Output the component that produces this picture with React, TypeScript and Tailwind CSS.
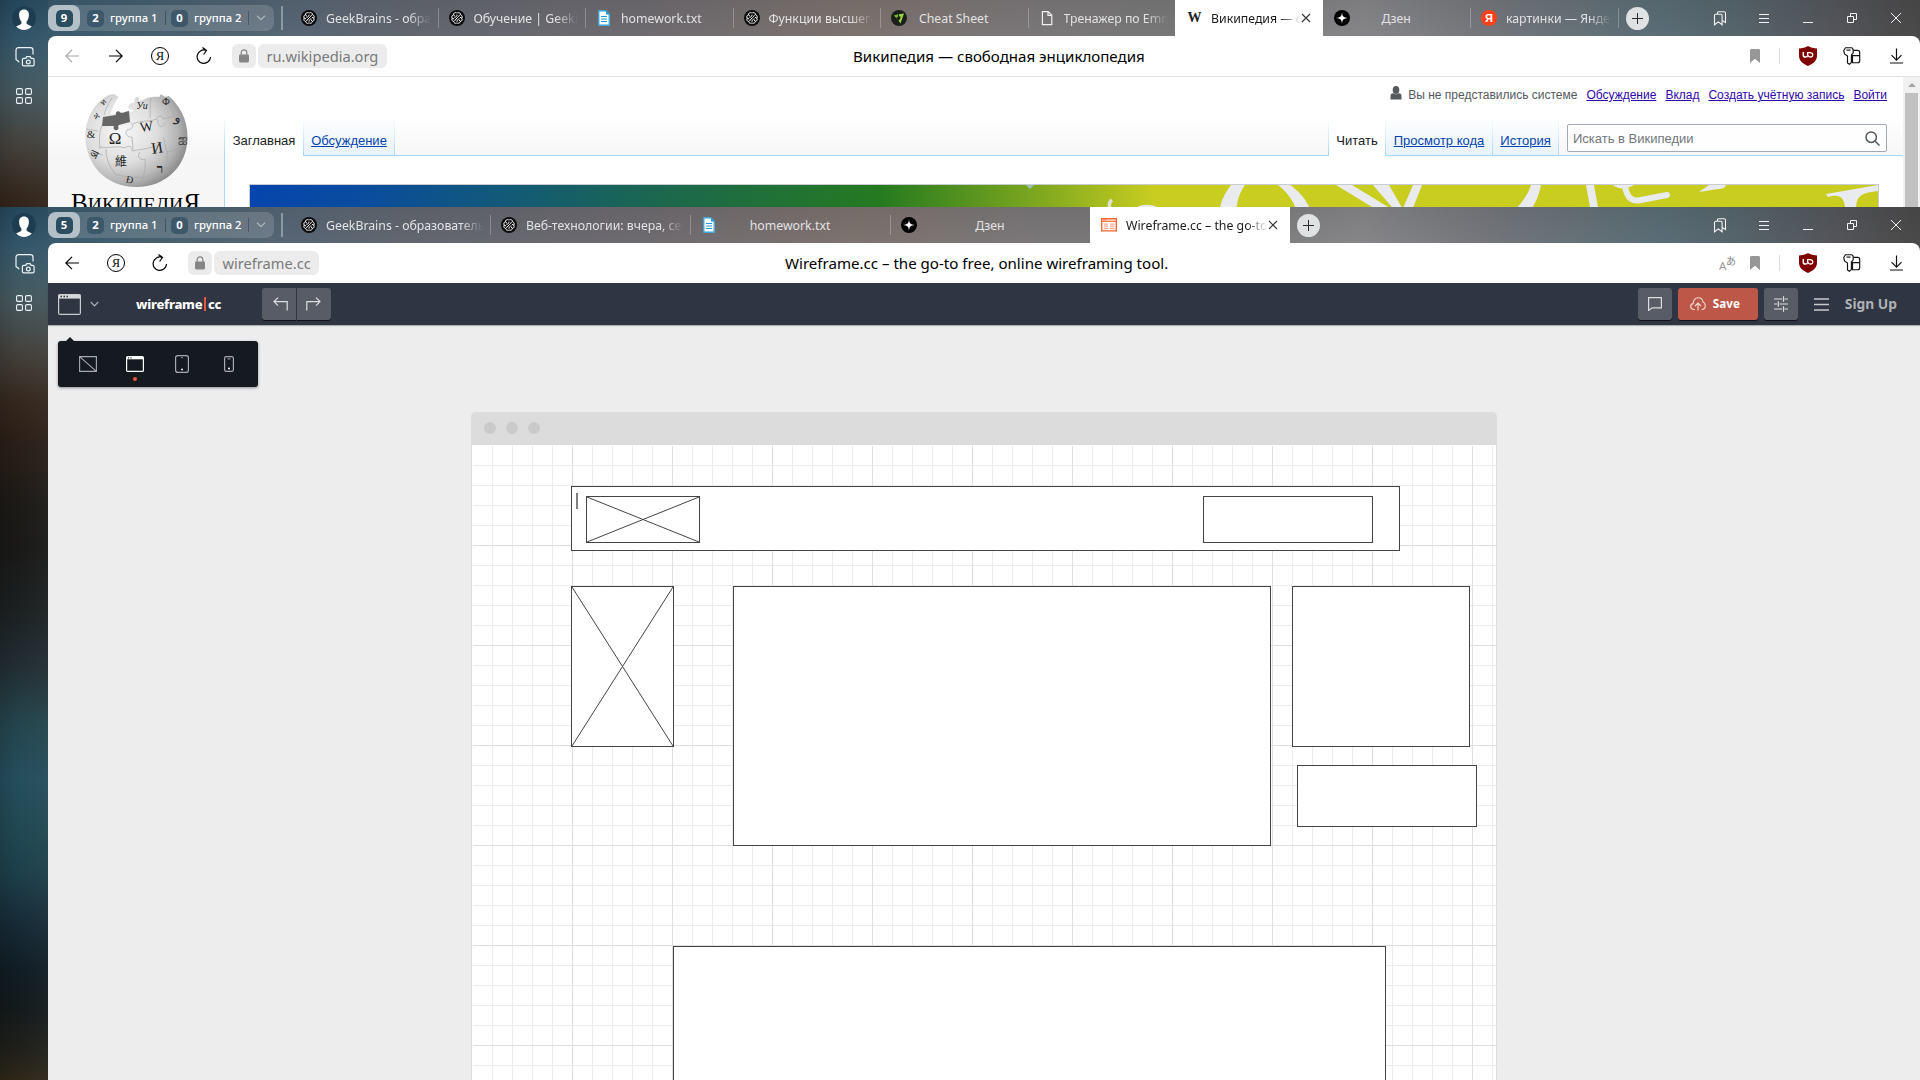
import type { ReactNode } from "react";

const UI = "font-['Noto_Sans','Open_Sans',sans-serif]";
const WIKI = "font-['Liberation_Sans',Arial,sans-serif]";

/* ---------- favicons ---------- */

function GeekIcon() {
  return (
    <svg width="16" height="16" viewBox="0 0 16 16" fill="none" stroke="#fff" strokeLinecap="round">
      <circle cx="8" cy="8" r="8" fill="#0b0b0b" stroke="none" />
      <path
        d="M7.300 2.700C5.600 2.200 4.300 3.300 4.500 4.700 2.900 5.200 2.300 7 3.200 8.200c-.8 1.500-.1 3 1.500 3.300.2 1.400 1.400 2.100 2.700 1.700M8.700 2.700c1.700-.5 3 .6 2.800 2 1.600.5 2.200 2.300 1.300 3.500.8 1.500.1 3-1.500 3.300-.2 1.400-1.400 2.100-2.700 1.700M5.800 7.300c1.200 0 2.200-.9 2.200-2.300M10.200 9c-1.200 0-2.200.9-2.200 2.300M10.500 5.200c-.6 1.200-1.600 1.800-2.500 2.800S6.200 10.200 5.500 10.900M4.600 5l1 .8M11.400 11.200l-1-.8M11.200 7.400l1.300.7M3.500 8.200l1.300.7"
        strokeWidth="1"
      />
    </svg>
  );
}

function DocIcon() {
  return (
    <svg width="16" height="16" viewBox="0 0 16 16">
      <path d="M2.5.5h7.6L14 4.4v11.1H2.5z" fill="#fff" />
      <path d="M2.8.8h7l3.4 3.6v10.8H2.8z" fill="#fff" stroke="#1d9cd8" strokeWidth="1.2" />
      <path d="M10 .5v4h4z" fill="#1d9cd8" />
      <path d="M5 6.5h6M5 9h6M5 11.5h6" stroke="#1d9cd8" strokeWidth="1.1" />
    </svg>
  );
}

function EmmetIcon() {
  return (
    <svg width="16" height="16" viewBox="0 0 16 16">
      <circle cx="8" cy="8" r="8" fill="#1c1e1c" />
      <path d="M2.800 5.400 7.400 4.300l-.6 2.700-1.500.5 2.600 3z" fill="#7bbd2a" />
      <path d="m8 4.200 5-.8-3.500 10-2-3 1.700-1.400.4-2.700-1.600.3z" fill="#95d63f" />
    </svg>
  );
}

function PageIcon() {
  return (
    <svg width="16" height="16" viewBox="0 0 16 16" fill="none" stroke="#f0f0f0" strokeWidth="1.2">
      <path d="M3.4 1.6h5.8l3.6 3.6v9.4H3.4zM9 1.6v3.8h3.8" />
    </svg>
  );
}

function WikiIcon() {
  return <span className="w-4 text-center font-['Liberation_Serif',serif] text-[14px] font-bold leading-4 tracking-[-1px] text-[#222]">W</span>;
}

function ZenIcon() {
  return (
    <svg width="16" height="16" viewBox="0 0 16 16">
      <circle cx="8" cy="8" r="8" fill="#000" />
      <path d="M8 2c.3 4.3 1.4 5.6 6 6-4.6.4-5.7 1.700-6 6-.3-4.300-1.400-5.600-6-6 4.600-.4 5.700-1.700 6-6z" fill="#fff" />
    </svg>
  );
}

function YandexRedIcon() {
  return (
    <span className="flex size-4 items-center justify-center rounded-full bg-[#fc3f1d] font-['Liberation_Sans',sans-serif] text-[11px] font-bold leading-none text-white">
      Я
    </span>
  );
}

function WireframeIcon() {
  return (
    <svg width="16" height="16" viewBox="0 0 16 16" fill="none" stroke="#f4652f">
      <path d="M.7 1.700h14.600v12.200H.7z" strokeWidth="1.400" />
      <path d="M1 4.300h14" strokeWidth="1.200" />
      <path d="M3 7.200h4M3 9.200h4M3 11.500h4M9 7.200h4.500M9 9.200h4.500M9 11.500h4.500" stroke="#f8a98a" strokeWidth="1.300" />
      <path d="M2 2.800h4" strokeWidth=".8" />
    </svg>
  );
}

/* ---------- browser chrome ---------- */

type Tab = { icon: ReactNode; title: string; center?: boolean; active?: boolean };

function TabItem({ tab, width, divider }: { tab: Tab; width: string; divider: boolean }) {
  const fade = "[mask-image:linear-gradient(to_right,#000_calc(100%-22px),transparent)]";
  return (
    <div className={`relative flex h-9 shrink-0 items-center ${width} ${tab.active ? "bg-white text-[#1b1b1b]" : "text-[#e2e2e4]"}`}>
      <span className="ml-[11px] flex size-4 shrink-0 items-center justify-center">{tab.icon}</span>
      <span
        className={`ml-[9px] min-w-0 flex-1 overflow-hidden whitespace-nowrap pt-px text-[12.3px] leading-5 ${
          tab.center ? "mr-[36px] text-center" : tab.active ? `mr-[22px] ${fade}` : `mr-[7px] ${fade}`
        }`}
      >
        {tab.title}
      </span>
      {tab.active && (
        <svg className="absolute right-[12px] top-[13px]" width="10" height="10" viewBox="0 0 10 10" stroke="#333" strokeWidth="1.1">
          <path d="m1 1 8 8M9 1 1 9" />
        </svg>
      )}
      {divider && <span className="absolute -right-px top-2 h-5 w-px bg-white/25" />}
    </div>
  );
}

function Groups({ count }: { count: string }) {
  return (
    <div className="flex h-[26px] w-[226px] shrink-0 items-center rounded-lg bg-white/15 text-[11.3px] text-white">
      <div className="flex h-[26px] w-8 items-center justify-center rounded-lg bg-[#b3c0c8]">
        <span className="flex h-[17px] w-[17px] items-center justify-center rounded-[5px] bg-[#2b4d60] font-bold">{count}</span>
      </div>
      <span className="ml-[7px] flex h-[17px] w-[17px] items-center justify-center rounded-[5px] bg-[#3b586b] font-bold">2</span>
      <span className="ml-[6px] w-[50px] whitespace-nowrap font-medium">группа 1</span>
      <span className="ml-[5px] h-[14px] w-px bg-[#3d5666]" />
      <span className="ml-[5px] flex h-[17px] w-[17px] items-center justify-center rounded-[5px] bg-[#3f5869] font-bold">0</span>
      <span className="ml-[6px] w-[50px] whitespace-nowrap font-medium">группа 2</span>
      <span className="ml-[4px] h-[14px] w-px bg-[#46596a]" />
      <svg className="ml-[7px]" width="10" height="6" viewBox="0 0 10 6" fill="none" stroke="#aab4bd" strokeWidth="1.3">
        <path d="m1 .7 4 4 4-4" />
      </svg>
    </div>
  );
}

function WindowControls() {
  return (
    <div className="ml-auto mr-[2px] flex h-9 items-center text-[#f2f2f2] [&>span]:flex [&>span]:w-11 [&>span]:justify-center">
      <span>
        <svg width="14" height="15" viewBox="0 0 14 15" fill="none" stroke="currentColor" strokeWidth="1.100">
          <path d="M1.500 4.500c0-.8.500-1.200 1.200-1.200h5.200c.8 0 1.200.5 1.200 1.200v9.300L5.300 10.900 1.500 13.800zM4.400 3.200V2c0-.8.500-1.300 1.300-1.300h5.500c.8 0 1.300.5 1.300 1.300v9.500l-3.200-2" />
        </svg>
      </span>
      <span>
        <svg width="10" height="11" viewBox="0 0 10 11" stroke="currentColor">
          <path d="M0 1.500h10M0 5.500h10M0 9.500h10" />
        </svg>
      </span>
      <span>
        <svg width="10" height="10" viewBox="0 0 10 10" stroke="currentColor">
          <path d="M0 9.500h10" />
        </svg>
      </span>
      <span>
        <svg width="10" height="10" viewBox="0 0 10 10" fill="none" stroke="currentColor">
          <path d="M.5 3.500h6v6h-6zM3.500 3.500v-3h6v6h-3" />
        </svg>
      </span>
      <span>
        <svg width="10" height="10" viewBox="0 0 10 10" stroke="currentColor">
          <path d="m0 0 10 10M10 0 0 10" />
        </svg>
      </span>
    </div>
  );
}

function TabBar({ count, tabs, widths, lastDivider }: { count: string; tabs: Tab[]; widths: string; lastDivider: boolean }) {
  return (
    <div className="flex h-9 items-center">
      <Groups count={count} />
      <span className="ml-[7px] mr-[7px] h-6 w-[2px] shrink-0 bg-white/35" />
      {tabs.map((t, i) => (
        <TabItem key={t.title} tab={t} width={widths} divider={i === tabs.length - 1 ? lastDivider : !t.active && !tabs[i + 1].active} />
      ))}
      <span className={`${lastDivider ? "ml-[8px]" : "ml-[7px]"} flex size-[23px] shrink-0 items-center justify-center rounded-full bg-[#dfe1e3]`}>
        <svg width="11" height="11" viewBox="0 0 11 11" stroke="#2a2a2a" strokeWidth="1">
          <path d="M5.500 0v11M0 5.500h11" />
        </svg>
      </span>
      <WindowControls />
    </div>
  );
}

function ArrowIcon({ flip, muted }: { flip?: boolean; muted?: boolean }) {
  return (
    <svg className={`${flip ? "rotate-180" : ""} ${muted ? "text-[#a6a6a6]" : "text-black"}`} width="14" height="14" viewBox="0 0 14 14" fill="none" stroke="currentColor" strokeWidth="1.2">
      <path d="M14 7H.8M7 .8.8 7 7 13.200" />
    </svg>
  );
}

function AddressBar({ host, title, forward, titleOffset, translate }: { host: string; title: string; forward?: boolean; titleOffset: string; translate?: boolean }) {
  return (
    <div className="flex h-10 items-center rounded-t-lg bg-white text-black">
      <div className={`flex shrink-0 items-center ${titleOffset} [&>b]:flex [&>b]:w-11 [&>b]:shrink-0 [&>b]:justify-center`}>
        <b className="ml-[2px]">
          <ArrowIcon muted={forward} />
        </b>
        {forward && (
          <b>
            <ArrowIcon flip />
          </b>
        )}
        <b>
          <span className="flex size-[18px] items-center justify-center rounded-full border border-black font-['Liberation_Serif',serif] text-[12px] font-normal leading-none">
            Я
          </span>
        </b>
        <b>
          <svg width="16" height="18" viewBox="0 0 16 18" fill="none" stroke="currentColor" strokeWidth="1.2">
            <path d="M9.800 3.300A6.700 6.700 0 1 0 14.500 10M6.500.600l4 2.900-2.900 4" />
          </svg>
        </b>
        <span className="ml-[6px] flex h-6 w-6 items-center justify-center rounded-md bg-[#ebebeb]">
          <svg width="12" height="14" viewBox="0 0 12 14">
            <path d="M3.200 6V3.600a2.800 2.800 0 0 1 5.600 0V6" fill="none" stroke="#858585" strokeWidth="1.200" />
            <rect x="1" y="5.400" width="10" height="8" rx="1.300" fill="#858585" />
          </svg>
        </span>
        <span className="ml-[2px] flex h-6 items-center rounded-md bg-[#ececec] px-[8.500px] text-[14.65px] leading-6 text-[#7a7a7a]">{host}</span>
      </div>
      <span className="whitespace-nowrap text-[15.080px] leading-6">{title}</span>
      <div className="ml-auto flex items-center">
        {translate && (
          <svg className="mr-[14px]" width="17" height="16" viewBox="0 0 17 16">
            <text x="0" y="15" fontSize="11.500" fill="#9a9a9a" fontFamily="Noto Sans, sans-serif">
              A
            </text>
            <text x="7" y="9.500" fontSize="10" fill="#8a8a8a" fontFamily="Noto Sans CJK JP, sans-serif">
              あ
            </text>
          </svg>
        )}
        <svg width="10" height="14" viewBox="0 0 10 14">
          <path d="M0 1.500C0 .6.600 0 1.500 0h7c.9 0 1.500.6 1.500 1.500V14L5 9.800 0 14z" fill="#979797" />
        </svg>
        <span className="ml-[19px] h-4 w-px bg-[#dcdcdc]" />
        <svg className="ml-[19px]" width="18" height="20" viewBox="0 0 18 20">
          <path d="M9 0c2.500 1.500 5.500 2.300 9 2.400v7.200c0 5-3.500 8.200-9 10.400-5.500-2.200-9-5.400-9-10.400V2.400C3.500 2.300 6.500 1.500 9 0z" fill="#800000" />
          <path d="M4.300 6v3.200c0 2.500 4 2.500 4.300.3" fill="none" stroke="#fff" strokeWidth="1.500" />
          <path d="M8.600 6.700H11c3.600 0 3.600 4.300.6 4.300-2.300 0-3.300-1.600-3-4.300z" fill="none" stroke="#fff" strokeWidth="1.300" />
        </svg>
        <svg className="ml-[26px]" width="18" height="18" viewBox="0 0 18 18" fill="none" stroke="#111" strokeWidth="1.150">
          <path d="M10.300 3.400h4.400c1.200 0 2 .8 2 2v8.300c0 1.200-.8 2-2 2H9.500V8.600h7.200" />
          <path d="M2.500.7h5.800c1.300 0 1.900 1.600 1.900 2.800v2.200c0 1-1.800 1.500-1.800 2.500v7.400l-2 1.700-1.900-1.300V9L1.500 7 .7 3.500z" fill="#fff" />
          <path d="M3.500 3.100h4" />
        </svg>
        <svg className="ml-[29px] mr-[17px]" width="13" height="16" viewBox="0 0 13 16" fill="none" stroke="#111" strokeWidth="1.200">
          <path d="M6.500.500v11.600M1.500 7.200l5 5 5-5M0 15h13" />
        </svg>
      </div>
    </div>
  );
}

function SideStrip() {
  return (
    <div className="relative flex w-12 shrink-0 flex-col items-center bg-[linear-gradient(to_bottom,#25475b_0px,#34566a_40px,#3d5a67_65px,#46585e_93px,#44423e_143px,#35281e_193px,#2d2018_227px,#1d1a17_292px,#191917_342px,#1c2021_401px,#222e34_461px,#24454d_516px,#254e5d_571px,#214a54_615px,#1d404b_665px,#172b37_715px,#101c24_765px,#141a1b_804px,#22211a_849px,#2f2819_873px)]">
      <div className="absolute inset-0 bg-[linear-gradient(to_right,rgba(0,0,0,0.12),transparent_40%,rgba(120,130,130,0.07))]" />
      <svg className="relative mt-[6px]" width="24" height="24" viewBox="0 0 24 24">
        <circle cx="12" cy="12" r="12" fill="#1f3d50" />
        <path d="M12 3.500c3.400 0 5 2.200 4.900 5.700-.1 3-1.200 5.200-2.300 6.300v2.300c1.500 1.200 3.700 1.600 5.200 2.700-2 2.200-4.900 3.500-7.800 3.500s-5.800-1.300-7.800-3.500c1.500-1.100 3.700-1.500 5.200-2.700v-2.300C8.300 14.400 7.200 12.200 7.100 9.200 7 5.700 8.600 3.500 12 3.500z" fill="#fff" />
      </svg>
      <svg className="relative ml-[1px] mt-[17px]" width="20" height="20" viewBox="0 0 20 20" fill="none" stroke="#eef3f5" strokeWidth="1.200">
        <path d="M4.300 14.800H4l-3-2.300V3.300C1 1.700 2 .7 3.500.7h12c1.500 0 2.500 1 2.500 2.600V7.500" />
        <path d="M8.700 11.400h2l1-1.800h3.400l1 1.800h1.700c.8 0 1.300.5 1.300 1.300v4.900c0 .8-.5 1.300-1.300 1.300H8.700c-.8 0-1.300-.5-1.300-1.300v-4.900c0-.8.500-1.300 1.300-1.300z" />
        <circle cx="13.300" cy="15" r="1.900" />
      </svg>
      <svg className="relative mt-[21px]" width="16" height="16" viewBox="0 0 16 16" fill="none" stroke="#eef3f5" strokeWidth="1.100">
        <rect x=".6" y=".6" width="5.800" height="5.800" rx="1.200" />
        <rect x="9.600" y=".6" width="5.800" height="5.800" rx="1.200" />
        <rect x=".6" y="9.600" width="5.800" height="5.800" rx="1.200" />
        <rect x="9.600" y="9.600" width="5.800" height="5.800" rx="1.200" />
      </svg>
    </div>
  );
}

function BrowserWindow({ className, children }: { className: string; children: ReactNode }) {
  return (
    <section className={`flex w-full overflow-hidden ${className}`}>
      <SideStrip />
      <div className="flex min-w-0 flex-1 flex-col bg-[linear-gradient(to_bottom,rgba(0,0,0,0.07),transparent_36px),linear-gradient(100deg,#385a6d_0px,#48606f_120px,#586675_250px,#62666f_360px,#6e6b70_590px,#7d736f_800px,#7b7778_950px,#787879_1120px,#868689_1300px,#74767b_1420px,#5a6d76_1590px,#56646b_1670px,#54565b_1760px,#474543_1880px)]">
        {children}
      </div>
    </section>
  );
}

/* ---------- Wikipedia page ---------- */

function Globe() {
  return (
    <svg className="h-[130px] w-[176px]" viewBox="48 77 176 130">
      <defs>
        <radialGradient id="sphere" cx="0.36" cy="0.4" r="0.68">
          <stop offset="0" stopColor="#f7f7f7" />
          <stop offset="0.5" stopColor="#dedede" />
          <stop offset="0.8" stopColor="#b4b4b4" />
          <stop offset="1" stopColor="#858585" />
        </radialGradient>
      </defs>
      <path
        d="M109 95c-14 7-23 22-23.500 40-.5 29 20 52 51 52 30 0 51-22 51-50 0-18-8-32-19-41-2 1-5 1-6-1-2-1-3 0-3 2-6-1-12 0-17 3l-4 1c2-3-1-5-3-3-2 2 0 4-2 5-3 0-6 2-5 5 2 2 4 1 5 3l-4 1-19 2c2-6 4-12 8-17-2-1-4-4-9-2z"
        fill="url(#sphere)"
      />
      <path d="M103 117l13-2c-1-3 2-5 4-3 1 2 4 0 9-1l1 11-11 3c-2 1 1 4-2 5s-4-2-3-4l-12 0z" fill="#666" />
      <g fill="none" stroke="#a8a8a8" strokeWidth=".7">
        <path d="M102 125c-3 8-3 15-2 24M100 147c9 2 16-2 25 1 4-4 8 0 7 3 9-2 18-2 26-6M130 122c6 4 1 8-3 8-3 4 1 8 5 7l1 12M133 124c8-4 16-2 24-5 0-4 6-4 6 0 8-2 14-4 20-1M158 120c-1 8 6 8 7 3M163 137c3 6 1 10 4 15 8-1 13-4 19-8M106 149c0 12 5 20 11 27M140 152c-4 5 1 9 5 7 1 8-1 16-4 26M117 174c10 5 20 2 27 4 8-5 17-7 25-5M167 152c1 8-2 14-4 21M151 98c-2 7 0 13-1 20M98 131l-12-2M90 152l13 3M112 98c-4 6-6 10-8 17M164 98c6 7 9 13 11 20" />
      </g>
      <g fill="#262626" fontFamily="Liberation Serif, serif" textAnchor="middle">
        <text x="115" y="144" fontSize="17">Ω</text>
        <text x="147" y="131" fontSize="14" transform="rotate(-8 147 131)">W</text>
        <text x="158" y="153" fontSize="16" transform="rotate(-9 158 153)">И</text>
        <text x="121" y="166" fontSize="12" fontFamily="Noto Sans CJK TC, sans-serif">維</text>
        <text x="160" y="173" fontSize="13" fontWeight="bold">ר</text>
        <text x="177" y="122" fontSize="13" transform="rotate(15 177 122)">و</text>
        <text x="142" y="109" fontSize="10" fontStyle="italic">Уи</text>
        <text x="166" y="105" fontSize="10">Ф</text>
        <text x="91" y="138" fontSize="11">&amp;</text>
        <text x="93" y="158" fontSize="11" transform="rotate(25 93 158)">ञ</text>
        <text x="183" y="143" fontSize="12">ஐ</text>
        <text x="96" y="119" fontSize="9" transform="rotate(20 96 119)">ት</text>
        <text x="129" y="183" fontSize="10" transform="rotate(12 129 183)">Ð</text>
        <text x="105" y="104" fontSize="8" transform="rotate(-40 105 104)">ท</text>
      </g>
      <text x="71" y="211" fontFamily="Liberation Serif, serif" fontSize="25" fill="#000" textLength="129" lengthAdjust="spacingAndGlyphs">
        В<tspan fontSize="19.500">ИКИПЕДИ</tspan>Я
      </text>
    </svg>
  );
}

function PageTab({ children, width, selected }: { children: ReactNode; width: string; selected?: boolean }) {
  return (
    <div className={`flex h-[39px] shrink-0 ${width}`}>
      <div
        className={`flex flex-1 justify-center pt-[13px] text-[13px] leading-[22px] ${
          selected ? "bg-white text-[#202122]" : "border-b border-[#a7d7f9] bg-linear-to-b from-white to-[#e8f2f8] text-[#0645ad] underline"
        }`}
      >
        {children}
      </div>
      <span className="w-px bg-linear-to-b from-white to-[#a7d7f9]" />
    </div>
  );
}

function Banner() {
  return (
    <div className="ml-[24px] mt-[28px] h-[30px] w-[1630px] border border-[#c8ccd1] bg-[linear-gradient(to_right,#0645ad_0px,#0a4c9f_110px,#1a6653_390px,#257a1f_630px,#85ab1f_800px,#c9cd20_905px)]">
      <svg className="block" width="1628" height="28" viewBox="250 185 1628 28" fill="#e9ebef">
        <path d="M1026 185h8l-4 4z" fill="#9bc3b4" />
        <path d="M1112 200c-4 3-3 8 0 11" fill="none" stroke="#dde4cd" strokeWidth="3.500" />
        <path d="M1134 209c6-5 18-6 26 0z" />
        <path d="M1231 185h14c-5 7-8 15-9 28h-17c1-11 6-20 12-28z" />
        <path d="M1278 185h12c9 6 17 15 22 28h-15c-3-12-9-20-19-28z" />
        <path d="M1336 185h16l46 28h-16zM1373 185h16l16 28h-8zM1413 185h9l-11 28h-10z" />
        <path d="M1531 185h10c-2 11-6 19-12 28h-17c9-9 16-18 19-28zM1586 185h8l5 28h-8z" />
        <path d="M1613 185h21c-7 4-15 5-21 0z" />
        <path d="M1625 186c2 13 8 16 16 14l26-5" fill="none" stroke="#e9ebef" strokeWidth="6" strokeLinecap="round" />
        <path d="M1699 192l10-7h17c-1 3-4 4-8 4z" />
        <path d="M1826 194l52-9v6c-18 2-24 6-21 22h-12c1-14-4-20-17-16z" />
      </svg>
    </div>
  );
}

function WikipediaPage() {
  return (
    <div className={`flex h-[131px] border-t border-[#e2e2e2] bg-white ${WIKI}`}>
      <div className="w-[176px] shrink-0 bg-linear-to-b from-white from-30% to-[#f6f6f6] to-62%">
        <Globe />
      </div>
      <div className="flex w-px shrink-0 bg-[linear-gradient(to_bottom,#fff_38px,#a7d7f9_78px)]" />
      <div className="min-w-0 flex-1">
        <div className="flex h-[79px] flex-col bg-linear-to-b from-white from-50% to-[#f6f6f6]">
          <div className="flex h-[40px] items-start justify-end gap-[9px] pr-4 pt-[9px] text-[12px] leading-[18px] text-[#3006ab]">
            <span className="flex items-start text-[#54595d]">
              <svg className="mr-[6px]" width="12" height="14" viewBox="0 0 12 14" fill="#54595d">
                <ellipse cx="6" cy="4" rx="3.300" ry="4" />
                <path d="M.5 13.500V10c0-1.700.9-2.500 2.700-2.700 1.700 1.200 3.900 1.200 5.600 0 1.800.2 2.700 1 2.700 2.700v3.500z" />
              </svg>
              Вы не представились системе
            </span>
            <span className="underline">Обсуждение</span>
            <span className="underline">Вклад</span>
            <span className="underline">Создать учётную запись</span>
            <span className="underline">Войти</span>
          </div>
          <div className="flex h-[39px]">
            <PageTab width="w-[79px]" selected>
              Заглавная
            </PageTab>
            <PageTab width="w-[91px]">Обсуждение</PageTab>
            <div className="flex-1 border-b border-[#a7d7f9]" />
            <span className="w-px bg-linear-to-b from-white to-[#a7d7f9]" />
            <PageTab width="w-[57px]" selected>
              Читать
            </PageTab>
            <PageTab width="w-[107px]">Просмотр кода</PageTab>
            <PageTab width="w-[66px]">История</PageTab>
            <div className="flex w-[344px] border-b border-[#a7d7f9] pl-[8px] pt-[7px]">
              <div className="flex h-7 w-[320px] items-center justify-between rounded-[2px] border border-[#a2a9b1] bg-white/80 pl-[5px] pr-[6px] pt-px text-[13px] text-[#72777d]">
                Искать в Википедии
                <svg className="-mt-px" width="15" height="15" viewBox="0 0 15 15" fill="none" stroke="#54595d" strokeWidth="1.500">
                  <circle cx="6.200" cy="6.200" r="5.200" />
                  <path d="m10 10 4.500 4.500" />
                </svg>
              </div>
            </div>
          </div>
        </div>
        <Banner />
      </div>
      <div className="flex w-[17px] shrink-0 flex-col items-center bg-[#f1f1f1]">
        <svg className="mt-[6px]" width="8" height="4" viewBox="0 0 8 4">
          <path d="M4 0l4 4H0z" fill="#a3a3a3" />
        </svg>
        <span className="mt-[6px] w-[13px] flex-1 bg-[#c1c1c1]" />
      </div>
    </div>
  );
}

/* ---------- wireframe editor ---------- */

const TOOL = "flex h-8 items-center justify-center bg-[#585c66] text-[#dddee0] shadow-[0_1px_0_#0f1217]";

function EditorHeader() {
  return (
    <header className="z-10 flex h-[42px] shrink-0 items-center bg-[#2f3542] shadow-[0_1px_1px_rgba(0,0,0,0.25)]">
      <svg className="ml-[10px]" width="23" height="21" viewBox="0 0 23 21">
        <rect x=".6" y=".6" width="21.800" height="19.800" rx="1.500" fill="none" stroke="#c9cbcf" strokeWidth="1.200" />
        <path d="M.6.6h21.800v4H.6z" fill="#d6d8db" />
        <path d="M2.500 2.500h1.500M5.500 2.500H7M8.500 2.500H10" stroke="#2f3542" strokeWidth="1.300" />
      </svg>
      <svg className="ml-[9px]" width="9" height="6" viewBox="0 0 9 6" fill="none" stroke="#b3b6bb" strokeWidth="1.200">
        <path d="m.7.800 3.800 4 3.800-4" />
      </svg>
      <div className="ml-[37px] flex w-[126px] items-center text-[13px] font-extrabold leading-5 tracking-[-0.25px] text-white">
        <span className="w-[68px]">wireframe</span>
        <span className="mr-[2px] h-[14px] w-[2px] bg-[#e4573d]" />
        <span>cc</span>
      </div>
      <div className="flex gap-px">
        <span className={`${TOOL} w-[34px] rounded-l-[3px]`}>
          <svg className="ml-[2px]" width="15" height="14" viewBox="0 0 15 14" fill="none" stroke="currentColor" strokeWidth="1.200">
            <path d="M14.200 13.500V4.600H1M5 .600l-4 4 4 4" />
          </svg>
        </span>
        <span className={`${TOOL} w-[34px] rounded-r-[3px]`}>
          <svg className="mr-[2px]" width="15" height="14" viewBox="0 0 15 14" fill="none" stroke="currentColor" strokeWidth="1.200">
            <path d="M.8 13.500V4.600H14M10 .600l4 4-4 4" />
          </svg>
        </span>
      </div>
      <div className="ml-auto flex items-center gap-[6px]">
        <span className={`${TOOL} w-[34px] rounded-[3px]`}>
          <svg width="14" height="14" viewBox="0 0 14 14" fill="none" stroke="currentColor" strokeWidth="1.200">
            <path d="M.6.600h12.800v10.200H4.200L.6 13.400z" />
          </svg>
        </span>
        <span className="flex h-8 w-20 items-center rounded-[3px] bg-[#bd5748] pl-3 text-[11.650px] font-bold text-white shadow-[0_1px_0_#0f1217]">
          <svg className="mr-[7px]" width="16" height="14" viewBox="0 0 16 14" fill="none" stroke="#f3dcd8" strokeWidth="1.100">
            <path d="M4.800 12.500H3.700C1.900 12.500.7 11.200.7 9.500c0-1.600 1.100-2.700 2.500-2.900C3.100 3.100 5.300.8 8.200.8c2.600 0 4.500 1.700 4.800 4.200 1.300.5 2.300 1.800 2.300 3.500 0 2.300-1.500 4-3.800 4M8 13.500V6.300M5 9l3-2.900L11 9" />
          </svg>
          Save
        </span>
        <span className={`${TOOL} w-[34px] rounded-[3px]`}>
          <svg width="14" height="16" viewBox="0 0 14 16" fill="none" stroke="currentColor" strokeWidth="1.200">
            <path d="M0 3h8M10.500 3H14M9.500.300v5.400M0 8h3M5.500 8H14M4.300 5.300v5.400M0 13h8M10.500 13H14M9.500 10.300v5.400" />
          </svg>
        </span>
        <svg className="ml-[10px]" width="15" height="13" viewBox="0 0 15 13" stroke="#c9cbcf" strokeWidth="1.400">
          <path d="M0 1h15M0 6.500h15M0 12h15" />
        </svg>
        <span className="ml-[10px] mr-[23px] text-[13.800px] font-bold leading-5 text-[#aeb1b5]">Sign Up</span>
      </div>
    </header>
  );
}

function DeviceMenu() {
  return (
    <div className="absolute left-[10px] top-[16px] h-[46px] w-[200px] rounded-[3px] bg-[#151920] shadow-[0_1px_3px_rgba(0,0,0,0.4)]">
      <span className="absolute left-[8px] top-[-4px] h-0 w-0 border-x-4 border-b-4 border-x-transparent border-b-[#151920]" />
      <div className="flex h-[46px] items-center justify-center [&>span]:flex [&>span]:w-[47px] [&>span]:justify-center">
        <span>
          <svg width="18" height="16" viewBox="0 0 18 16" fill="none" stroke="#a7a9ac" strokeWidth="1.100">
            <path d="M.6.600h16.800v14.800H.6zM.6.600l16.800 14.800" />
          </svg>
        </span>
        <span className="relative">
          <svg width="18" height="16" viewBox="0 0 18 16" fill="none" stroke="#fff" strokeWidth="1.200">
            <rect x=".6" y=".6" width="16.800" height="14.800" rx="1" />
            <path d="M1 2h16" strokeWidth="2.600" />
            <path d="M2 1.800h1M4.500 1.800h1" stroke="#151920" />
          </svg>
          <i className="absolute left-[22px] top-[21px] size-1 rounded-full bg-[#f0563b]" />
        </span>
        <span>
          <svg width="14" height="18" viewBox="0 0 14 18" fill="none" stroke="#a7a9ac" strokeWidth="1.200">
            <rect x=".6" y=".6" width="12.800" height="16.800" rx="2.200" />
            <path d="M6 2.600h2" strokeWidth=".8" />
            <circle cx="7" cy="14.500" r=".9" fill="#fff" stroke="none" />
          </svg>
        </span>
        <span>
          <svg width="10" height="16" viewBox="0 0 10 16" fill="none" stroke="#a7a9ac" strokeWidth="1.200">
            <rect x=".6" y=".6" width="8.800" height="14.800" rx="1.600" />
            <path d="M3.500 2.900h3" strokeWidth="1" />
            <circle cx="5" cy="12.500" r="1" fill="#fff" stroke="none" />
          </svg>
        </span>
      </div>
    </div>
  );
}

function Box({ place, cross }: { place: string; cross?: boolean }) {
  return (
    <div className={`absolute border border-[#444] bg-white ${place}`}>
      {cross && (
        <svg className="block h-full w-full" viewBox="0 0 100 100" preserveAspectRatio="none" stroke="#444">
          <path d="M0 0l100 100M100 0 0 100" vectorEffect="non-scaling-stroke" />
        </svg>
      )}
    </div>
  );
}

function Editor() {
  return (
    <main className="relative min-h-0 flex-1 overflow-hidden bg-[#ededed]">
      <div className="ml-[423px] mt-[87px] w-[1026px]">
        <div className="flex h-[33px] items-center gap-[10px] rounded-t-[5px] bg-[#dcdcdc] pb-px pl-[13px] [&>i]:size-3 [&>i]:rounded-full [&>i]:bg-[#cacaca]">
          <i />
          <i />
          <i />
        </div>
        <div className="relative h-[640px] border-x border-[#dcdcdc] bg-white">
          <div className="absolute left-px top-px h-[639px] w-[1024px] bg-[repeating-linear-gradient(to_right,transparent_0px,transparent_99px,#dfdfdf_99px,#dfdfdf_100px),repeating-linear-gradient(to_bottom,transparent_0px,transparent_99px,#dfdfdf_99px,#dfdfdf_100px),repeating-linear-gradient(to_right,transparent_0px,transparent_19px,#ececec_19px,#ececec_20px),repeating-linear-gradient(to_bottom,transparent_0px,transparent_19px,#ececec_19px,#ececec_20px)]" />
          <Box place="left-[99px] top-[41px] h-[65px] w-[829px]" />
          <span className="absolute left-[104px] top-[48px] h-4 w-[2px] bg-[#808080]" />
          <Box place="left-[114px] top-[51px] h-[47px] w-[114px]" cross />
          <Box place="left-[731px] top-[51px] h-[47px] w-[170px]" />
          <Box place="left-[99px] top-[141px] h-[161px] w-[103px]" cross />
          <Box place="left-[261px] top-[141px] h-[260px] w-[538px]" />
          <Box place="left-[820px] top-[141px] h-[161px] w-[178px]" />
          <Box place="left-[825px] top-[320px] h-[62px] w-[180px]" />
          <Box place="left-[201px] top-[501px] h-[160px] w-[713px]" />
        </div>
      </div>
      <DeviceMenu />
    </main>
  );
}

const TOP_TABS: Tab[] = [
  { icon: <GeekIcon />, title: "GeekBrains - образ" },
  { icon: <GeekIcon />, title: "Обучение | GeekB" },
  { icon: <DocIcon />, title: "homework.txt" },
  { icon: <GeekIcon />, title: "Функции высшего" },
  { icon: <EmmetIcon />, title: "Cheat Sheet", center: true },
  { icon: <PageIcon />, title: "Тренажер по Emm" },
  { icon: <WikiIcon />, title: "Википедия — с", active: true },
  { icon: <ZenIcon />, title: "Дзен", center: true },
  { icon: <YandexRedIcon />, title: "картинки — Яндек" },
];

const BOTTOM_TABS: Tab[] = [
  { icon: <GeekIcon />, title: "GeekBrains - образователь" },
  { icon: <GeekIcon />, title: "Веб-технологии: вчера, сег" },
  { icon: <DocIcon />, title: "homework.txt", center: true },
  { icon: <ZenIcon />, title: "Дзен", center: true },
  { icon: <WireframeIcon />, title: "Wireframe.cc – the go-to", active: true },
];

export default function App() {
  return (
    <div className={`flex h-[1080px] w-[1920px] flex-col overflow-hidden ${UI}`}>
      <BrowserWindow className="h-[207px] shrink-0">
        <TabBar count="9" tabs={TOP_TABS} widths="w-[147.5px]" lastDivider />
        <AddressBar host="ru.wikipedia.org" title="Википедия — свободная энциклопедия" forward titleOffset="w-[805px]" />
        <WikipediaPage />
      </BrowserWindow>
      <BrowserWindow className="h-[873px]">
        <TabBar count="5" tabs={BOTTOM_TABS} widths="w-[200px]" lastDivider={false} />
        <AddressBar host="wireframe.cc" title="Wireframe.cc – the go-to free, online wireframing tool." titleOffset="w-[737px]" translate />
        <EditorHeader />
        <Editor />
      </BrowserWindow>
    </div>
  );
}
